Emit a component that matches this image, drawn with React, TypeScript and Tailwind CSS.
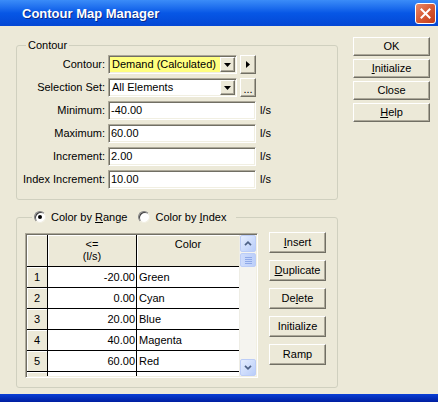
import React from 'react';

const raised =
  'bg-[#ece9d8] border border-t-white border-l-white border-r-[#716f64] border-b-[#716f64] shadow-[inset_-1px_-1px_0_#aca899]';
const sunken =
  'border border-t-[#aca899] border-l-[#aca899] border-r-white border-b-white shadow-[inset_1px_1px_0_#716f64,inset_-1px_-1px_0_#f1efe2]';
const cellGrey = 'bg-[#ece9d8] shadow-[inset_1px_1px_0_#ffffff]';

function Btn({ children, className = '' }: { children: React.ReactNode; className?: string }) {
  return <div className={`${raised} flex items-center justify-center ${className}`}>{children}</div>;
}

function DownTri() {
  return (
    <svg width="7" height="4" viewBox="0 0 7 4">
      <path d="M0 0h7L3.5 4z" fill="#000" />
    </svg>
  );
}

function Field({ label, value, unit }: { label: string; value: string; unit: string }) {
  return (
    <div className="flex items-center h-[19px]">
      <div className="w-[88px] text-right">{label}</div>
      <div className={`${sunken} ml-[3px] w-[148px] h-full bg-white flex items-center pl-[2px]`}>{value}</div>
      <div className="ml-[4px]">{unit}</div>
    </div>
  );
}

function Combo({
  label,
  value,
  yellow,
  side,
}: {
  label: string;
  value: string;
  yellow?: boolean;
  side: React.ReactNode;
}) {
  return (
    <div className="flex items-center h-[19px]">
      <div className="w-[88px] text-right">{label}</div>
      <div className={`${sunken} ml-[3px] w-[129px] h-full flex p-[1px]`}>
        <div className={`flex-1 flex items-center pl-[2px] ${yellow ? 'bg-[#ffff80]' : 'bg-white'}`}>{value}</div>
        <Btn className="w-[15px] h-full">
          <DownTri />
        </Btn>
      </div>
      <Btn className="ml-[3px] w-[16px] h-[19px]">{side}</Btn>
    </div>
  );
}

function Radio({ checked }: { checked?: boolean }) {
  return (
    <span className="w-[12px] h-[12px] rounded-full bg-white border border-t-[#808080] border-l-[#808080] border-r-[#f1efe2] border-b-[#f1efe2] shadow-[inset_1px_1px_0_#404040] flex items-center justify-center">
      {checked && <span className="w-[4px] h-[4px] rounded-full bg-black" />}
    </span>
  );
}

function Chevron({ up }: { up?: boolean }) {
  return (
    <svg width="8" height="5" viewBox="0 0 8 5">
      <path
        d={up ? 'M1 4.2L4 1.2L7 4.2' : 'M1 0.8L4 3.8L7 0.8'}
        stroke="#4d6185"
        strokeWidth="1.7"
        fill="none"
      />
    </svg>
  );
}

const rows = [
  ['1', '-20.00', 'Green'],
  ['2', '0.00', 'Cyan'],
  ['3', '20.00', 'Blue'],
  ['4', '40.00', 'Magenta'],
  ['5', '60.00', 'Red'],
  ['6', '', ''],
];

export default function App() {
  return (
    <div className="w-[438px] h-[402px] flex flex-col overflow-hidden bg-[#ece9d8] text-[11px] leading-[13px] text-black font-['Liberation_Sans',Arial,sans-serif]">
      {/* title bar */}
      <div className="h-[26px] flex items-center justify-between pl-[22px] pr-[2px] bg-gradient-to-b from-[#3b8cf8] via-[#0757e6] to-[#0447d4]">
        <span className="text-white font-bold text-[13px] [text-shadow:1px_1px_0_#0a2a8a]">Contour Map Manager</span>
        <div className="w-[21px] h-[21px] rounded-[3px] border border-white bg-gradient-to-br from-[#e9896a] via-[#d75a34] to-[#c23a18] flex items-center justify-center">
          <svg width="11" height="11" viewBox="0 0 11 11">
            <path d="M1.5 1.5L9.5 9.5M9.5 1.5L1.5 9.5" stroke="#fff" strokeWidth="2" strokeLinecap="square" />
          </svg>
        </div>
      </div>

      {/* body */}
      <div className="flex-1 flex pl-[16px] pt-[11px]">
        <div className="w-[322px] flex flex-col">
          <fieldset className="mt-[2px] h-[161px] border border-[#d0d0bf] rounded-[3px] pt-[3px]">
            <legend className="ml-[9px] px-[2px] leading-[13px]">Contour</legend>
            <div className="flex flex-col gap-[4px]">
              <Combo
                label="Contour:"
                value="Demand (Calculated)"
                yellow
                side={
                  <svg width="4" height="7" viewBox="0 0 4 7">
                    <path d="M0 0v7l4-3.5z" fill="#000" />
                  </svg>
                }
              />
              <Combo label="Selection Set:" value="All Elements" side={<span className="leading-[8px] pt-[2px]">...</span>} />
              <Field label="Minimum:" value="-40.00" unit="l/s" />
              <Field label="Maximum:" value="60.00" unit="l/s" />
              <Field label="Increment:" value="2.00" unit="l/s" />
              <Field label="Index Increment:" value="10.00" unit="l/s" />
            </div>
          </fieldset>

          <fieldset className="mt-[10px] h-[178px] border border-[#d0d0bf] rounded-[3px] pt-[9px] pl-[8px]">
            <legend className="ml-[7px] pl-[2px] pr-[10px] flex items-center h-[14px]">
              <Radio checked />
              <span className="ml-[5px]">
                Color by <u className="underline-offset-[1px]">R</u>ange
              </span>
              <span className="ml-[11px]">
                <Radio />
              </span>
              <span className="ml-[5px]">
                Color by <u className="underline-offset-[1px]">I</u>ndex
              </span>
            </legend>
            <div className="flex">
              <div className={`${sunken} w-[233px] h-[145px] p-[1px] flex`}>
                <div className="flex-1 overflow-hidden bg-white">
                  <div className="flex h-[32px] border-b border-black">
                    <div className={`w-[21px] border-r border-black ${cellGrey}`} />
                    <div className={`w-[89px] border-r border-black ${cellGrey} flex flex-col items-center pt-[3px] leading-[12px]`}>
                      <span>&lt;=</span>
                      <span>(l/s)</span>
                    </div>
                    <div className={`flex-1 ${cellGrey} flex justify-center pt-[3px] leading-[12px]`}>Color</div>
                  </div>
                  {rows.map(([n, v, c]) => (
                    <div key={n} className="flex h-[21px] border-b border-black">
                      <div className={`w-[21px] border-r border-black ${cellGrey} flex items-center justify-center`}>{n}</div>
                      <div className="w-[89px] border-r border-black flex items-center justify-end pr-[1px]">{v}</div>
                      <div className="flex-1 flex items-center pl-[2px]">{c}</div>
                    </div>
                  ))}
                </div>
                <div className="w-[17px] flex flex-col bg-[#f5f4ef] border-l border-[#eeede5]">
                  <div className="h-[17px] rounded-[2px] border border-[#bccdf7] bg-gradient-to-br from-[#e6eefe] to-[#b9cdf9] flex items-center justify-center">
                    <Chevron up />
                  </div>
                  <div className="h-[14px] mt-[1px] rounded-[2px] border border-[#bccdf7] bg-gradient-to-r from-[#cfdcfc] to-[#bccff9] flex flex-col items-center justify-center gap-[1px]">
                    <span className="w-[7px] h-[1px] bg-[#8fa9e8]" />
                    <span className="w-[7px] h-[1px] bg-[#8fa9e8]" />
                    <span className="w-[7px] h-[1px] bg-[#8fa9e8]" />
                    <span className="w-[7px] h-[1px] bg-[#8fa9e8]" />
                  </div>
                  <div className="flex-1" />
                  <div className="h-[17px] rounded-[2px] border border-[#bccdf7] bg-gradient-to-br from-[#e6eefe] to-[#b9cdf9] flex items-center justify-center">
                    <Chevron />
                  </div>
                </div>
              </div>
              <div className="ml-[11px] -mt-[1px] flex flex-col gap-[7px]">
                <Btn className="w-[57px] h-[21px]">
                  <span><u className="underline-offset-[1px]">I</u>nsert</span>
                </Btn>
                <Btn className="w-[57px] h-[21px]">
                  <span><u className="underline-offset-[1px]">D</u>uplicate</span>
                </Btn>
                <Btn className="w-[57px] h-[21px]">
                  <span>De<u className="underline-offset-[1px]">l</u>ete</span>
                </Btn>
                <Btn className="w-[57px] h-[21px]">Initialize</Btn>
                <Btn className="w-[57px] h-[21px]">Ramp</Btn>
              </div>
            </div>
          </fieldset>
        </div>

        <div className="ml-[15px] flex flex-col gap-[3px]">
          <Btn className="w-[77px] h-[19px]">OK</Btn>
          <Btn className="w-[77px] h-[19px]">
            <span><u className="underline-offset-[1px]">I</u>nitialize</span>
          </Btn>
          <Btn className="w-[77px] h-[19px]">Close</Btn>
          <Btn className="w-[77px] h-[19px]">
            <span><u className="underline-offset-[1px]">H</u>elp</span>
          </Btn>
        </div>
      </div>

      {/* bottom frame */}
      <div className="h-[8px] bg-gradient-to-b from-[#0b3fd6] to-[#001ea0]" />
    </div>
  );
}
